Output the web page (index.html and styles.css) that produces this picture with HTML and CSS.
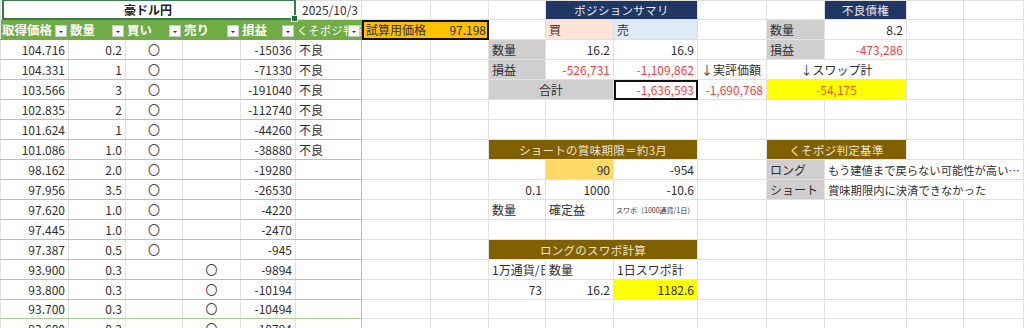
FILE: index.html
```html
<!DOCTYPE html>
<html lang="ja">
<head>
<meta charset="utf-8">
<title>豪ドル円</title>
<link rel="stylesheet" href="styles.css">
</head>
<body>
<table class="sheet">
  <colgroup>
    <col class="w68"><col class="w57"><col class="w57"><col class="w58"><col class="w55"><col class="w66">
    <col class="w69"><col class="w58"><col class="w57"><col class="w68"><col class="w84"><col class="w69">
    <col class="w58"><col class="w82"><col class="w57"><col class="w60">
  </colgroup>
  <tbody>
    <tr class="r1">
      <td colspan="5" class="title"><span class="sel"></span><span class="handle"></span>豪ドル円</td>
      <td class="num">2025/10/3</td>
      <td></td><td></td><td></td>
      <td colspan="2" class="navy">ポジションサマリ</td>
      <td></td><td></td>
      <td class="navy">不良債権</td>
      <td></td><td></td>
    </tr>
    <tr>
      <td class="th">取得価格<span class="flt"></span></td>
      <td class="th">数量<span class="flt"></span></td>
      <td class="th">買い<span class="flt"></span></td>
      <td class="th">売り<span class="flt"></span></td>
      <td class="th">損益<span class="flt"></span></td>
      <td class="th last">くそポジ判定<span class="flt"></span></td>
      <td colspan="2" class="trial"><span class="trial-row"><span>試算用価格</span><span>97.198</span></span></td>
      <td></td>
      <td class="buy">買</td>
      <td class="sell">売</td>
      <td></td>
      <td class="lbl">数量</td>
      <td class="num">8.2</td>
      <td></td><td></td>
    </tr>
    <tr>
      <td class="tb num">104.716</td><td class="tb num">0.2</td><td class="tb mk">〇</td><td class="tb"></td><td class="tb num">-15036</td><td class="tb last">不良</td>
      <td></td><td></td>
      <td class="lbl">数量</td><td class="num">16.2</td><td class="num">16.9</td>
      <td></td>
      <td class="lbl">損益</td><td class="num red">-473,286</td>
      <td></td><td></td>
    </tr>
    <tr>
      <td class="tb num">104.331</td><td class="tb num">1</td><td class="tb mk">〇</td><td class="tb"></td><td class="tb num">-71330</td><td class="tb last">不良</td>
      <td></td><td></td>
      <td class="lbl">損益</td><td class="num red">-526,731</td><td class="num red">-1,109,862</td>
      <td>↓実評価額</td>
      <td colspan="2" class="ctr">↓スワップ計</td>
      <td></td><td></td>
    </tr>
    <tr>
      <td class="tb num">103.566</td><td class="tb num">3</td><td class="tb mk">〇</td><td class="tb"></td><td class="tb num">-191040</td><td class="tb last">不良</td>
      <td></td><td></td>
      <td colspan="2" class="lbl ctr">合計</td>
      <td class="num red boxed">-1,636,593</td>
      <td class="num red">-1,690,768</td>
      <td colspan="2" class="yellow ctr swap">-54,175</td>
      <td></td><td></td>
    </tr>
    <tr>
      <td class="tb num">102.835</td><td class="tb num">2</td><td class="tb mk">〇</td><td class="tb"></td><td class="tb num">-112740</td><td class="tb last">不良</td>
      <td></td><td></td><td></td><td></td><td></td><td></td><td></td><td></td><td></td><td></td>
    </tr>
    <tr>
      <td class="tb num">101.624</td><td class="tb num">1</td><td class="tb mk">〇</td><td class="tb"></td><td class="tb num">-44260</td><td class="tb last">不良</td>
      <td></td><td></td><td></td><td></td><td></td><td></td><td></td><td></td><td></td><td></td>
    </tr>
    <tr>
      <td class="tb num">101.086</td><td class="tb num">1.0</td><td class="tb mk">〇</td><td class="tb"></td><td class="tb num">-38880</td><td class="tb last">不良</td>
      <td></td><td></td>
      <td colspan="3" class="brown">ショートの賞味期限＝約3月</td>
      <td></td>
      <td colspan="2" class="brown">くそポジ判定基準</td>
      <td></td><td></td>
    </tr>
    <tr>
      <td class="tb num">98.162</td><td class="tb num">2.0</td><td class="tb mk">〇</td><td class="tb"></td><td class="tb num">-19280</td><td class="tb last"></td>
      <td></td><td></td><td></td>
      <td class="num gold">90</td><td class="num">-954</td>
      <td></td>
      <td class="lbl">ロング</td>
      <td colspan="3" class="note">もう建値まで戻らない可能性が高い…</td>
    </tr>
    <tr>
      <td class="tb num">97.956</td><td class="tb num">3.5</td><td class="tb mk">〇</td><td class="tb"></td><td class="tb num">-26530</td><td class="tb last"></td>
      <td></td><td></td>
      <td class="num">0.1</td><td class="num">1000</td><td class="num">-10.6</td>
      <td></td>
      <td class="lbl">ショート</td>
      <td colspan="3" class="note">賞味期限内に決済できなかった</td>
    </tr>
    <tr>
      <td class="tb num">97.620</td><td class="tb num">1.0</td><td class="tb mk">〇</td><td class="tb"></td><td class="tb num">-4220</td><td class="tb last"></td>
      <td></td><td></td>
      <td>数量</td><td>確定益</td><td class="tiny">スワポ（1000通貨/1日）</td>
      <td></td><td></td><td></td><td></td><td></td>
    </tr>
    <tr>
      <td class="tb num">97.445</td><td class="tb num">1.0</td><td class="tb mk">〇</td><td class="tb"></td><td class="tb num">-2470</td><td class="tb last"></td>
      <td></td><td></td><td></td><td></td><td></td><td></td><td></td><td></td><td></td><td></td>
    </tr>
    <tr>
      <td class="tb num">97.387</td><td class="tb num">0.5</td><td class="tb mk">〇</td><td class="tb"></td><td class="tb num">-945</td><td class="tb last"></td>
      <td></td><td></td>
      <td colspan="3" class="brown">ロングのスワポ計算</td>
      <td></td><td></td><td></td><td></td><td></td>
    </tr>
    <tr>
      <td class="tb num">93.900</td><td class="tb num">0.3</td><td class="tb"></td><td class="tb mk">〇</td><td class="tb num">-9894</td><td class="tb last"></td>
      <td></td><td></td>
      <td>1万通貨/日</td><td>数量</td><td>1日スワポ計</td>
      <td></td><td></td><td></td><td></td><td></td>
    </tr>
    <tr>
      <td class="tb num">93.800</td><td class="tb num">0.3</td><td class="tb"></td><td class="tb mk">〇</td><td class="tb num">-10194</td><td class="tb last"></td>
      <td></td><td></td>
      <td class="num">73</td><td class="num">16.2</td><td class="num yellow">1182.6</td>
      <td></td><td></td><td></td><td></td><td></td>
    </tr>
    <tr class="r19">
      <td class="tb num">93.700</td><td class="tb num">0.3</td><td class="tb"></td><td class="tb mk">〇</td><td class="tb num">-10494</td><td class="tb last"></td>
      <td></td><td></td><td></td><td></td><td></td><td></td><td></td><td></td><td></td><td></td>
    </tr>
    <tr>
      <td class="tb num">93.600</td><td class="tb num">0.3</td><td class="tb"></td><td class="tb mk">〇</td><td class="tb num">-10794</td><td class="tb last"></td>
      <td></td><td></td><td></td><td></td><td></td><td></td><td></td><td></td><td></td><td></td>
    </tr>
  </tbody>
</table>
</body>
</html>
```

FILE: styles.css
```css
html, body {
  margin: 0;
  padding: 0;
  background: #ffffff;
}

body {
  font-family: "Noto Sans CJK JP", "Noto Sans", sans-serif;
  font-size: 12px;
  color: #303030;
  overflow: hidden;
}

.sheet {
  border-collapse: collapse;
  table-layout: fixed;
  width: 1023px;
  margin-left: 0;
}

.w55 { width: 55px; }
.w57 { width: 57px; }
.w58 { width: 58px; }
.w60 { width: 60px; }
.w66 { width: 66px; }
.w68 { width: 68px; }
.w69 { width: 69px; }
.w82 { width: 82px; }
.w84 { width: 84px; }

.sheet tr {
  height: 20px;
}

.sheet tr.r1,
.sheet tr.r19 {
  height: 19px;
}

.sheet td {
  border: 1px solid #e1e1e1;
  padding: 0 3px;
  white-space: nowrap;
  overflow: hidden;
  vertical-align: middle;
  line-height: 16px;
  position: relative;
}

.num {
  text-align: right;
}

.ctr {
  text-align: center;
}

.red {
  color: #ff3d3d;
}

/* title / selection */
.title {
  text-align: center;
  font-weight: bold;
  overflow: visible !important;
  color: #222;
}

.sel {
  position: absolute;
  left: 1px;
  right: -1px;
  top: -2px;
  bottom: -1px;
  border: 2px solid #3b7a4e;
  pointer-events: none;
}

.handle {
  position: absolute;
  right: -3px;
  bottom: -3px;
  width: 5px;
  height: 5px;
  background: #217346;
  border: 1px solid #ffffff;
  z-index: 2;
}

/* table header */
.th {
  background: #70ad47;
  color: #ffffff;
  font-weight: bold;
  font-size: 12.5px;
  padding-left: 1px !important;
  border-bottom-color: #70ad47 !important;
  border-right-color: #70ad47 !important;
}

.th.last {
  font-weight: normal;
  font-size: 11px;
  letter-spacing: 0.5px;
}

.flt {
  position: absolute;
  right: 1px;
  bottom: 2px;
  width: 10px;
  height: 10px;
  background: #f7f7f7;
  border: 1px solid #c8c8c8;
}

.flt::after {
  content: "";
  position: absolute;
  left: 3px;
  top: 5px;
  border-left: 2px solid transparent;
  border-right: 2px solid transparent;
  border-top: 2px solid #333333;
}

/* table body */
.tb {
  border-bottom-color: #a9d08e !important;
}

.tb.last {
  border-right-color: #a9d08e !important;
}

.mk {
  text-align: center;
  color: #444444;
}

/* summary blocks */
.navy {
  background: #203764;
  color: #e6eaf2;
  text-align: center;
  font-size: 11.5px;
  letter-spacing: 0.3px;
}

.trial {
  background: #ffc000;
  outline: 2px solid #111111;
  outline-offset: -2px;
  padding: 0 2px 0 4px !important;
}

.trial-row {
  display: flex;
  justify-content: space-between;
}

.buy {
  background: #fce4d6;
}

.sell {
  background: #ddebf7;
}

.lbl {
  background: #d0cece;
}

.boxed {
  outline: 2px solid #111111;
  outline-offset: -2px;
}

.yellow {
  background: #ffff00;
}

.swap {
  color: #f25a22;
}

.gold {
  background: #ffd966;
}

.brown {
  background: #806000;
  color: #efe6d2;
  text-align: center;
  font-size: 11.5px;
  letter-spacing: 0.3px;
}

.note {
  font-size: 11.3px;
}

.tiny {
  font-size: 7px;
  padding-left: 2px !important;
}
```
